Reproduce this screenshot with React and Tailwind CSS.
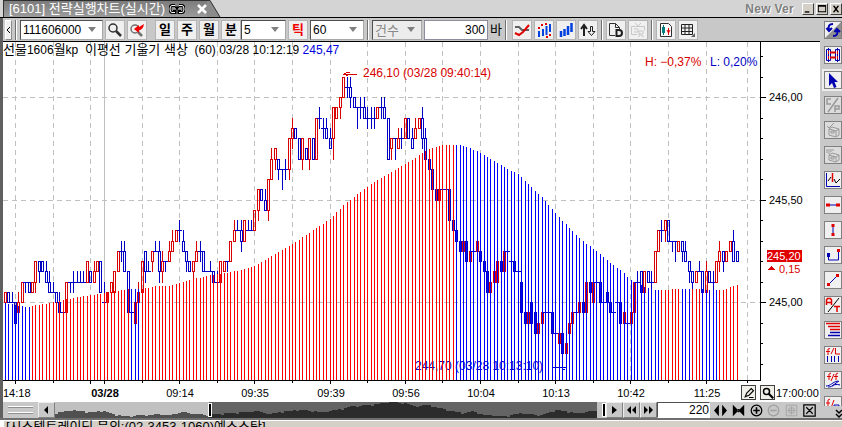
import { useState } from 'react'
import clsx from 'clsx'

// [open, close, high, low] in 0.05 ticks from 245.00
const CANDLES = [
  [0, 1], [1, 0], [0, 0, 1], [0, -2], [-1, 0, 1], [0, 2], [2, 2, 2, 1], [2, 1], [1, 2], [2, 4, 4, 1],
  [4, 3, 4, 2], [4, 3], [3, 2, 4], [2, 1, 3], [1, 1, 2], [1, 0], [0, -1, 1], [-1, -1], [-1, 2], [2, 2, 2, 1],
  [2, 2, 3, 1], [2, 2, 3], [2, 2, 3], [2, 2, 3], [2, 4], [3, 2], [2, 3, 4], [3, 4], [4, 1], [0, 0, 2],
  [0, 1], [1, 2], [1, 3], [3, 5], [5, 5, 6, 4], [5, 3, 6], [3, -1], [-1, -1], [-2, 0], [0, 1, 2],
  [1, 4], [5, 3, 5, 2], [3, 3, 4], [4, 5, 5, 3], [5, 5, 6], [5, 3, 6, 2], [3, 4, 5, 2], [4, 4, 4, 3], [4, 5, 6], [5, 6, 7],
  [6, 7], [7, 7, 8, 6], [6, 5, 7], [5, 4, 5, 3], [4, 3], [3, 4, 4, 2], [4, 5, 6], [5, 5, 6, 4], [5, 3], [3, 3],
  [3, 3, 4], [3, 2], [2, 2, 3], [2, 4], [3, 4], [4, 4, 4, 3], [4, 6], [6, 7, 8], [7, 7, 8], [7, 6, 8, 5],
  [6, 8], [7, 7, 8], [7, 7, 8], [7, 9], [9, 11, 11, 8], [11, 10], [10, 9, 11], [9, 12, 12, 8], [12, 14, 15], [14, 15, 15, 13],
  [14, 13, 14, 12], [13, 13, 13, 11], [13, 13, 14, 12], [13, 16, 16, 12], [16, 17, 18, 15], [17, 16], [16, 14], [14, 16, 16, 13], [15, 14], [14, 16, 16, 13],
  [16, 14], [14, 18], [18, 18, 19, 17], [17, 17, 18, 16], [17, 16, 18], [16, 15, 17], [16, 19, 19, 14], [18, 19], [19, 20, 20, 18], [20, 22],
  [21, 21, 22, 20], [21, 20, 22, 19], [20, 19], [19, 19, 19, 17], [19, 19, 20, 18], [19, 18, 20], [18, 18, 19, 17], [18, 18, 19, 17], [18, 18, 19, 17], [18, 19],
  [19, 19, 20, 18], [19, 18, 20], [18, 14], [15, 16, 16, 14], [16, 16, 16, 14], [15, 16, 17], [16, 16, 17, 15], [16, 18], [18, 16], [16, 15, 17],
  [16, 17, 18], [17, 18], [18, 16, 19, 15], [16, 14, 17], [14, 13], [13, 11], [11, 10], [10, 11], [11, 11], [11, 11],
  [11, 8], [8, 7], [7, 6], [6, 5], [5, 6], [6, 4], [4, 5], [5, 5], [5, 6], [5, 4],
  [4, 3], [3, 1], [1, 2], [2, 3], [2, 4], [4, 3], [3, 5], [5, 5], [4, 4], [4, 3],
  [3, 3], [2, -1], [-1, -2], [-2, -1], [0, -2], [-1, -3], [-3, -2], [-2, -1], [-1, -1], [-1, -1],
  [-1, -3], [-3, -3], [-4, -3], [-3, -5], [-5, -4], [-3, -2], [-2, -1], [-1, -1], [-1, 0], [0, -1],
  [-1, 2], [2, 1], [0, 2], [2, 2], [2, 0], [0, 0], [1, 0], [0, -1], [-1, -1], [0, 0],
  [0, -2], [-2, -1], [-2, -2], [-2, -1], [-1, 2], [2, 2, 3], [3, 1], [1, 3], [3, 2], [2, 2, 3, 1],
  [2, 5], [5, 7], [7, 7, 8, 6], [7, 8, 8, 6], [8, 6], [6, 6, 6, 5], [6, 6, 6, 4], [5, 6], [6, 5, 6, 4], [5, 4, 6],
  [4, 3, 4, 2], [3, 2, 3, 1], [2, 3], [3, 3, 4], [3, 1], [1, 3, 4], [3, 2], [2, 2, 3, 1], [2, 4], [4, 5, 6, 3],
  [5, 4, 5, 3], [4, 5], [5, 6], [6, 4, 7], [5, 4],
]

// moving average curve: [bar index, y]
const AVERAGE = [
  [0, 303], [3, 305], [6, 307], [8, 306], [13, 303], [17, 300], [20, 298], [25, 295], [29, 293], [31, 292],
  [36, 289], [40, 289], [44, 286], [48, 286], [52, 282], [55, 279], [59, 276], [62, 274], [66, 272], [70, 269],
  [73, 266], [77, 258], [80, 252], [84, 244], [88, 235], [91, 228], [95, 219], [99, 205], [103, 194], [107, 184],
  [111, 176], [115, 168], [119, 160], [121, 155], [124, 149], [126, 147], [128, 145], [133, 145], [136, 148],
  [139, 153], [142, 159], [146, 167], [150, 174], [153, 184], [157, 197], [161, 213], [165, 228], [169, 241],
  [173, 251], [177, 263], [180, 270], [183, 280], [186, 285], [188, 288], [190, 290], [193, 290], [196, 289],
  [203, 289], [207, 290], [210, 290], [212, 287], [214, 285],
]

const FALLING = [[0, 7], [37, 39], [132, 191], [198, 200], [204, 208]]

const GRID_X = [15, 53, 90, 142, 179, 217, 254, 292, 330, 367, 405, 442, 480, 518, 555, 593, 630, 668, 706, 747]

const TIMES = [
  [179, '09:14'], [254, '09:35'], [330, '09:39'], [405, '09:56'],
  [480, '10:04'], [555, '10:13'], [630, '10:42'], [706, '11:25'],
]

const OVERVIEW = [
  [0, 11], [15, 8], [27, 9], [32, 10], [48, 9], [60, 13], [68, 14], [88, 13], [104, 12], [112, 13], [127, 10], [138, 12],
  [151, 13], [160, 12], [172, 11], [188, 10], [198, 9], [205, 10], [212, 12], [228, 9], [245, 8], [265, 10], [285, 7],
  [295, 4], [315, 3], [332, 0], [348, 1], [357, 4], [372, 3], [382, 6], [395, 9], [407, 11], [415, 9], [425, 13],
  [448, 14], [462, 11], [482, 13], [498, 8], [518, 11], [535, 9], [540, 9],
]

const barX = (i) => Math.floor(5.2 + i * 3.42)
const tickY = (n) => Math.round(302 - n * 10.25)

function interpolate(points, i) {
  const k = points.findIndex(p => p[0] >= i)
  if (k <= 0) return points[0][1]
  const [x0, y0] = points[k - 1]
  const [x1, y1] = points[k]
  return Math.round(y0 + ((y1 - y0) * (i - x0)) / (x1 - x0))
}

function Candle({ i, data }) {
  const [open, close, high = Math.max(open, close), low = Math.min(open, close)] = data
  const x = barX(i)
  const color = close > open ? '#d80000' : '#0000c4'
  const top = tickY(Math.max(open, close))
  const bottom = tickY(Math.min(open, close))
  return (
    <g fill={color}>
      {top === bottom
        ? <rect x={x - 2} y={top} width="5" height="1" />
        : <path fillRule="evenodd" d={`M${x - 1} ${top}h3V${bottom + 1}h-3zM${x} ${top + 1}V${bottom}h1V${top + 1}z`} />}
      <rect x={x} y={tickY(high)} width="1" height={top - tickY(high)} />
      <rect x={x} y={bottom} width="1" height={tickY(low) - bottom + 1} />
    </g>
  )
}

function Chart() {
  return (
    <svg viewBox="3 42 817 360" className="block w-full bg-white font-['Liberation_Sans','Noto_Sans_CJK_KR',sans-serif] text-[12px]" shapeRendering="crispEdges">
      {/* grid */}
      <g stroke="#c0c0c0" strokeDasharray="5 4">
        {GRID_X.map(x => <path key={x} d={`M${x + 0.5} 42V380`} />)}
        {[97, 200, 302].map(y => <path key={y} d={`M3 ${y + 0.5}H760`} />)}
      </g>
      <rect x="104" y="42" width="1" height="338" fill="#c0c0c0" />

      {CANDLES.map((c, i) => <Candle key={i} i={i} data={c} />)}

      <text x="415" y="370" fill="#0000c4">244,70 (03/28 10:13:10)</text>
      <path d="M553 367.5h13M562 369.5h3" stroke="#0000c4" />

      {/* average histogram */}
      {CANDLES.map((_, i) => {
        const y = interpolate(AVERAGE, i)
        const down = FALLING.some(([a, b]) => i >= a && i <= b)
        return <rect key={i} x={barX(i)} y={y} width="1" height={380 - y} fill={down ? '#0000ff' : '#ff0000'} />
      })}

      <path d="M357 74.5H343M344 73.5h2M346 72.5h4M346 75.5h2" stroke="#d80000" fill="none" />
      <text x="363" y="77" fill="#d80000">246,10 (03/28 09:40:14)</text>
      <text x="645" y="66" fill="#d80000">H: −0,37%</text>
      <text x="710" y="66" fill="#0000c4">L: 0,20%</text>

      {/* axes */}
      <path d="M3 380.5H761M760.5 42V380" stroke="#000" />
      {GRID_X.map((x, i) => <rect key={x} x={x} y="381" width="1" height={i % 2 ? 2 : 3} />)}
      <rect x="104" y="381" width="1" height="3" />
      {[-6, -4, -2, 0, 2, 4, 6, 8, 10, 12, 14, 16, 18, 20, 22, 24].map(n => (
        <rect key={n} x="761" y={tickY(n)} width={n % 10 ? 2 : 5} height="1" />
      ))}
      <g className="text-[11px]">
        <text x="769" y="101">246,00</text>
        <text x="769" y="204">245,50</text>
        <text x="769" y="306">245,00</text>
        <rect x="767" y="250" width="35" height="12" fill="#e00000" />
        <text x="767" y="260" fill="#fff">245,20</text>
        <path d="M768 270l3.500-4 3.500 4z" fill="#d80000" />
        <text x="779" y="273" fill="#d80000">0,15</text>

        <text x="3" y="397">14:18</text>
        <text x="105" y="397" textAnchor="middle" fontWeight="bold">03/28</text>
        {TIMES.map(([x, label]) => <text key={x} x={x + 1} y="397" textAnchor="middle">{label}</text>)}
        <text x="776" y="397">17:00:00</text>
      </g>
    </svg>
  )
}

function ToolButton({ label, className, children }) {
  return (
    <button
      aria-label={label}
      className={clsx('flex h-5 w-5 shrink-0 items-center justify-center border border-r-[#8c8c8c] border-b-[#8c8c8c] border-t-white border-l-white bg-[#f0f0f0] outline outline-1 outline-[#b4b4b4] -outline-offset-1', className)}
    >
      {children}
    </button>
  )
}

function Separator() {
  return <div className="mx-[3px] h-5 w-0.5 shrink-0 border-l border-[#707070] bg-white" />
}

function Combo({ label, value, className, disabled }) {
  return (
    <div className={clsx('relative h-5 shrink-0 border border-t-[#505050] border-l-[#505050] border-r-[#a8a8a8] border-b-[#a8a8a8]', disabled ? 'bg-[#ececec] text-[#888]' : 'bg-white', className)}>
      <select aria-label={label} disabled={disabled} defaultValue={value} className="block h-full w-full appearance-none bg-transparent px-0.5 opacity-100 outline-none">
        <option>{value}</option>
      </select>
      <svg className="pointer-events-none absolute top-1.5 right-1.5" width="8" height="5" viewBox="0 0 8 5"><path d="M0 0h8L4 5z" fill="#808080" /></svg>
    </div>
  )
}

const Svg = ({ size = 16, children, ...props }) => (
  <svg width={size} height={size} viewBox="0 0 16 16" fill="none" className="shrink-0" {...props}>{children}</svg>
)

const RED = '#e00000'
const BLUE = '#0000b0'

const SIDE_TOOLS = [
  ['새로고침', <><path d="M16 0v16H0z" fill="#909090" /><path d="M8 2C4 2 3 4 4 8M1.500 6L4 9l3-3M8 14c4 0 5-2 4-6M9.500 10L12 7l3 3" stroke={BLUE} strokeWidth="2" /></>],
  ['동기화', <><path d="M1.500 2.500h4v11h-4zM10.500 2.500h4v11h-4zM3.500 1v14M12.500 1v14" stroke={BLUE} /><path d="M5 5.500h6M5 10.500h6" stroke={RED} strokeWidth="2" /><path d="M3.500 4v3M3.500 9v3M12.500 4v3M12.500 9v3" stroke={RED} /></>],
  ['선택', <path d="M4 1v13l3-3 2 5 2.500-1-2-5H13z" fill={BLUE} />],
  ['C/P', <path d="M6 2H2v5h4M3 15L13 1M10 15V9h4v3h-4" stroke="#999" strokeWidth="1.500" />],
  ['삭제', <path d="M2 4l2 2 5-5M4 7l3-2 7 2v6l-3 2-7-2zM4 7l7 2v5M11 9l3-2M6 9h3v2H6z" stroke="#999" />],
  ['모두 삭제', <path d="M2 2v4M4 2v5M6 2v3M8 2v2M4 8l3-2 7 2v5l-3 2-7-2zM4 8l7 2v5M11 10l3-2M6 10h3v2H6z" stroke="#999" />],
  ['지표', <><path d="M1.500 1v13.500H15" stroke={BLUE} /><path d="M3 9l3-4M9 7l2 4 4-4" stroke="#000" /><path d="M7.500 1v9" stroke={RED} strokeWidth="1.500" /></>],
  ['수평선', <><path d="M3 8h10" stroke={BLUE} /><path d="M1 6.500h4v3H1zM11 6.500h4v3h-4z" fill={RED} /></>],
  ['수직선', <><path d="M8 3v10" stroke={BLUE} /><path d="M6.500 2h3v3h-3zM6.500 11h3v3h-3z" fill={RED} /></>],
  ['가격선', <><path d="M3.500 8v5h10V5" stroke={BLUE} /><path d="M2 6h3v4H2z" fill={BLUE} /><path d="M12 2h3v3h-3z" fill={RED} /></>],
  ['추세선', <><path d="M3 13L13 3" stroke={BLUE} /><path d="M2 11h3v3H2zM11 2h3v3h-3z" fill={RED} /></>],
  ['문자', <><path d="M1.500 8V3l1-1.500h3L6.500 3v5M2 5.500h4M9 9.500h6M12 9v6" stroke={RED} strokeWidth="1.500" /><path d="M3 15L14 1" stroke="#000" /></>],
  ['되돌림', <><path d="M1 1.500h14M3 4.500h12M5 7.500h10" stroke={RED} strokeWidth="1.500" /><path d="M5 10.500h10M3 13.500h12" stroke={BLUE} strokeWidth="1.500" /></>],
  ['시간대', <><path d="M5 1.500L3 2v6M1 4.500h4M10.500 1v6H15M6 7l3-6" stroke={RED} /><path d="M2.500 9v6M6.500 9v6M9.500 9v6M13.500 9v6" stroke={BLUE} /></>],
  ['팬', <><path d="M6 1L4 2v6M2 4.500h4M13 1l-2 1v6M9 4.500h4M6 9l3-7" stroke={RED} /><path d="M1 14c5 0 6-4 12-5M3 15c6 0 5-4 12-2M7 14l7-5" stroke={BLUE} /></>],
  ['호', <><path d="M5 2L3 3v8M1 6h4M6 11L9 3" stroke={RED} /><path d="M9 8h5v5H9zM2 13h5" stroke={BLUE} /></>],
]

const NAV_ICONS = [
  ['확대', <path d="M6 1v14L0 8zM10 1v14l6-7z" fill="#000" />],
  ['축소', <path d="M1 1v14l7-7zM15 1v14L8 8zM7 6h2v4H7z" fill="#000" />],
  ['더하기', <><circle cx="8" cy="8" r="6.500" stroke="#000" strokeWidth="1.500" /><path d="M8 4v8M4 8h8" stroke="#000" strokeWidth="2" /></>],
  ['빼기', <><circle cx="8" cy="8" r="6.500" stroke="#a0a0a0" strokeWidth="1.500" /><path d="M4 8h8" stroke="#a0a0a0" strokeWidth="2" /></>],
  ['격자', <path d="M1.500 1.500h13v13h-13zM8 3v10M3 8h10M5 5h6v6H5z" stroke="#a0a0a0" />],
  ['닫기', <path d="M1 1h14v14H1zM4 4l8 8M12 4l-8 8" stroke="#000" strokeWidth="1.500" />],
]

function TitleBar() {
  return (
    <header className="flex h-[18px] items-stretch border-b border-black bg-[#d4d4d4] pl-[3px]">
      <div className="flex items-center border-t border-l border-[#303030] bg-gradient-to-b from-[#7c7c7c] to-[#9c9c9c] pl-[5px]">
        <span className="text-[13px] leading-4 whitespace-pre text-white">[6101] 전략실행차트(실시간)</span>
        <svg className="ml-1" width="16" height="10" viewBox="0 0 16 10" fill="none">
          <path d="M6 1.500H3Q1 1.500 1 5t2 3.500h3V6H4M10 1.500h3q2 0 2 3.500t-2 3.500h-3V6h2M6 4h4" stroke="#000" strokeWidth="3" />
          <path d="M6 1.500H3Q1 1.500 1 5t2 3.500h3M10 1.500h3q2 0 2 3.500t-2 3.500h-3M4 5h3M9 5h3" stroke="#fff" />
        </svg>
        <button aria-label="탭 닫기" className="ml-3">
          <svg width="10" height="10" viewBox="0 0 10 10"><path d="M1 1l8 8M9 1L1 9" stroke="#fff" strokeWidth="2.500" /></svg>
        </button>
      </div>
      <svg width="14" height="17" viewBox="0 0 14 17" className="shrink-0">
        <path d="M0 0h3l10 17H0z" fill="#8c8c8c" />
        <path d="M0 .5h3L13 17" fill="none" stroke="#303030" />
      </svg>
      <span className="ml-auto self-center font-['Liberation_Sans'] text-[12px] leading-4 font-bold tracking-wide text-[#808080] [text-shadow:1px_1px_0_white]">New Ver</span>
      <div className="ml-2 flex items-center gap-0.5">
        {[['최소화', 'M2 8h5v1.500H2z'], ['최대화', 'M1 1h9v8H1zM2 3v5h7V3z'], ['닫기', 'M2 2h2l1.500 2L7 2h2L6.500 5.500 9 9H7L5.500 7 4 9H2l2.500-3.500z']].map(([label, d]) => (
          <button key={label} aria-label={label} className="flex h-3 w-3 items-center justify-center border border-t-white border-l-white border-r-[#404040] border-b-[#404040] bg-[#d4d0c8]">
            <svg width="10" height="10" viewBox="0 0 11 11"><path d={d} fillRule="evenodd" /></svg>
          </button>
        ))}
      </div>
    </header>
  )
}

function Toolbar() {
  const [bars, setBars] = useState('300')
  return (
    <div className="flex h-6 items-center border-b border-black bg-[#c8c8c8] pl-0.5 text-[12px]">
      <button aria-label="이전" className="flex h-5 w-[7px] items-center justify-center border border-r-[#8c8c8c] border-b-[#8c8c8c] border-t-white border-l-white bg-[#f0f0f0]">
        <svg width="5" height="6" viewBox="0 0 5 6"><path d="M4 0L1 3l3 3" fill="none" stroke="#000" /></svg>
      </button>
      <Separator />
      <Combo label="종목" value="111606000" className="w-[83px]" />
      <div className="ml-0.5 flex gap-0.5">
        <ToolButton label="종목 검색">
          <Svg><circle cx="6" cy="6" r="4" stroke="#303030" strokeWidth="1.500" /><path d="M9 9l5 5" stroke="#303030" strokeWidth="2.500" /></Svg>
        </ToolButton>
        <ToolButton label="전략 검색">
          <Svg><circle cx="6" cy="7" r="4" stroke="#707070" strokeWidth="1.500" /><path d="M9 10l4 4" stroke="#707070" strokeWidth="2.500" /><path d="M15 2l-5 3V3L5 7l5 4V8q4 0 5-6z" fill="#f00000" /></Svg>
        </ToolButton>
      </div>
      <div className="ml-2 flex gap-0.5 text-[13px] leading-4 font-bold">
        {['일', '주', '월', '분'].map(t => <ToolButton key={t}>{t}</ToolButton>)}
      </div>
      <Combo label="분 주기" value="5" className="w-[45px]" />
      <ToolButton className="ml-0.5 text-[13px] leading-4 font-bold text-[#f00000]">틱</ToolButton>
      <Combo label="틱 주기" value="60" className="ml-0.5 w-[54px]" />
      <Separator />
      <Combo label="조회 기준" value="건수" disabled className="w-[50px] text-[13px]" />
      <input
        id="bars"
        value={bars}
        onChange={(e) => setBars(e.target.value)}
        className="ml-0.5 h-5 w-16 border border-[#8c8c9c] bg-white pr-0.5 text-right outline-none"
      />
      <label htmlFor="bars" className="ml-0.5 text-[13px]">바</label>
      <Separator />
      <div className="ml-0.5 flex gap-0.5">
        <ToolButton label="이평선">
          <Svg><path d="M1 5h4l3 3h7" stroke="#606060" strokeWidth="2" /><path d="M1 11l4 2 4-3 6-7" stroke={RED} strokeWidth="2" /></Svg>
        </ToolButton>
        <ToolButton label="신호 표시">
          <Svg><path d="M3 9v6M7 7v7M10.500 4v9M14 2v8" stroke="#0040e0" strokeWidth="2" /><path d="M2 5h2v2H2zM5 2h2v2H5zM10 14h2v2h-2zM13 12h2v2h-2zM9 1h2v2H9z" fill={RED} /></Svg>
        </ToolButton>
        <ToolButton label="봉 차트">
          <Svg><path d="M3 9v6M6.500 7v7M10 4v9M13.500 1v9" stroke="#0040e0" strokeWidth="2.500" /></Svg>
        </ToolButton>
        <ToolButton label="정렬">
          <Svg><path d="M4 14V4M1 7l3-4 3 4" stroke="#202020" strokeWidth="2" /><path d="M10.500 4.500h2v5h2.500l-3.500 4-3.500-4h2.500z" stroke="#202020" /></Svg>
        </ToolButton>
      </div>
      <Separator />
      <div className="flex gap-0.5">
        <ToolButton label="문서">
          <Svg><path d="M7 13.500H1.500v-12h6l4 4V7M7.500 1.500v4h4" stroke="#303030" /><path d="M8.500 8v6h2.500q3 0 3-3t-3-3z" stroke="#202020" strokeWidth="2" /></Svg>
        </ToolButton>
        <ToolButton label="연결">
          <Svg><path d="M5 1l3 3 3-3M1.500 4.500h13v4M1.500 4.500v8H7M9 15V9h4v3H9l5 3M4 7h4v3H4" stroke="#c8c8c8" /></Svg>
        </ToolButton>
      </div>
      <Separator />
      <div className="flex gap-0.5">
        <ToolButton label="종목 정보">
          <Svg><path d="M2.500 1.500h8l3 3v10h-11z" stroke="#303030" fill="#fff" /><path d="M5.500 3v10" stroke="#007070" /><path d="M4 5h3v6H4z" fill="#008080" /><path d="M10.500 6v7M9 8l1.500 3L12 8" stroke={RED} /></Svg>
        </ToolButton>
        <ToolButton label="표">
          <Svg><path d="M1.500 2.500h11v10h-11zM5 2v11M9 2v11M1 6h12M1 9.500h12" stroke="#202020" /><path d="M15 11v4h-4z" fill="#606060" /></Svg>
        </ToolButton>
      </div>
    </div>
  )
}

function NavButton({ label, d }) {
  return (
    <button aria-label={label} className="flex h-4 w-[17px] shrink-0 items-center justify-center border border-t-[#ececec] border-l-[#ececec] border-r-[#808080] border-b-[#808080] bg-[#c8c8c8]">
      <svg width="9" height="8" viewBox="0 0 9 8"><path d={d} /></svg>
    </button>
  )
}

function NavBar() {
  const [count, setCount] = useState('220')
  // stepped outline of the whole session
  let outline = 'M0 16'
  for (let x = 0; x < 540; x += 3) {
    outline += `V${interpolate(OVERVIEW, x) + ((x * 7) % 5 === 0 ? 1 : 0)}H${x + 3}`
  }
  outline += 'V16z'
  return (
    <div className="flex h-4 items-center bg-[#c8c8c8]">
      <div className="flex w-[35px] shrink-0 flex-col gap-1 px-[5px]">
        <div className="h-0.5 border-t border-white bg-[#909090]" />
        <div className="h-0.5 border-t border-white bg-[#909090]" />
      </div>
      <NavButton label="왼쪽" d="M6 0v8L2 4z" />
      <svg className="h-4 min-w-0 flex-1" viewBox="0 0 549 16" preserveAspectRatio="none" shapeRendering="crispEdges">
        <rect width="549" height="16" fill="#c0c0c0" />
        <rect x="153" width="387" height="16" fill="#646464" />
        <path d={outline} fill="#505050" />
        <clipPath id="range"><rect x="153" width="387" height="16" /></clipPath>
        <path d={outline} fill="#2c2c2c" clipPath="url(#range)" />
        <path d="M152 1h4v14h-4zM545 1h4v14h-4z" fill="#fff" />
        <path d="M153 2h2v12h-2zM546 2h2v12h-2z" fill="#000" />
      </svg>
      <NavButton label="오른쪽" d="M2 0v8l5-4z" />
      <NavButton label="뒤로" d="M4 0v8L0 4zM9 0v8L5 4z" />
      <NavButton label="앞으로" d="M0 0v8l4-4zM5 0v8l4-4z" />
      <input
        aria-label="봉 개수"
        value={count}
        onChange={(e) => setCount(e.target.value)}
        className="h-4 w-[53px] shrink-0 border border-t-[#505050] border-l-[#505050] border-r-white border-b-white bg-white text-right text-[12px] leading-none outline-none"
      />
      <div className="flex w-[110px] shrink-0 items-center justify-between px-1">
        {NAV_ICONS.map(([label, icon]) => (
          <button key={label} aria-label={label}><Svg size={13}>{icon}</Svg></button>
        ))}
      </div>
    </div>
  )
}

function SideBar() {
  return (
    <aside className="relative w-[22px] shrink-0 overflow-hidden bg-[#c8c8c8]">
      <div className="absolute inset-x-0 top-0 bottom-3 flex flex-col gap-[7px] overflow-hidden pt-[3px] pl-1">
        {SIDE_TOOLS.map(([label, icon], i) => (
          <button
            key={label}
            aria-label={label}
            className={clsx(
              'flex h-[18px] w-[18px] shrink-0 items-center justify-center border border-[#808080]',
              i === 2 && 'outline outline-2 outline-[#ececec]',
              i > 2 && i < 6 ? 'bg-[#dcdcdc]' : 'bg-[#f0f0f0]'
            )}
          >
            <Svg>{icon}</Svg>
          </button>
        ))}
      </div>
      <button aria-label="더보기" className="absolute right-0 bottom-0">
        <svg width="7" height="9" viewBox="0 0 7 9"><path d="M1 1l3 3 3-3M1 5l3 3 3-3" fill="none" stroke="#000" strokeWidth="1.500" /></svg>
      </button>
    </aside>
  )
}

export default function App() {
  return (
    <div className="h-screen overflow-hidden bg-[#d4d0c8] font-['Liberation_Sans','Noto_Sans_CJK_KR',sans-serif] text-black">
      <TitleBar />
      <div className="flex border-l-[3px] border-[#606060]">
        <main className="min-w-0 flex-1">
          <Toolbar />
          <div className="relative">
            <Chart />
            <h1 className="absolute top-0 left-0 text-[12px] leading-4 whitespace-pre">
              <span className="text-[13px]">선물</span>1606<span className="text-[13px]">월</span>kp  <span className="text-[13px]">이평선 기울기 색상</span>  (60) 03/28 10:12:19 <span className="text-[#0000e0]">245,47</span>
            </h1>
            <div className="absolute right-[45px] bottom-0.5 flex gap-1">
              <button aria-label="그리기" className="flex h-[15px] w-[15px] items-center justify-center border border-[#404040] bg-[#f0f0e8]">
                <Svg size={12}><path d="M3 13l2-5 6-6 3 3-6 6zM8 14h6" stroke="#000" strokeWidth="1.500" /></Svg>
              </button>
              <button aria-label="돋보기" className="flex h-[15px] w-[15px] items-center justify-center border border-[#404040] bg-[#f0f0e8]">
                <Svg size={12}><circle cx="6" cy="6" r="4" stroke="#000" strokeWidth="2" /><path d="M9 9l6 6" stroke="#000" strokeWidth="3" /></Svg>
              </button>
            </div>
          </div>
          <NavBar />
        </main>
        <SideBar />
      </div>
      <div className="border-t-2 border-[#707070]">
        <footer className="border-t border-l-4 border-white pl-0.5 text-[13px] leading-3">[시스템트레이딩 문의:(02-3453-1060)예스스탁]</footer>
      </div>
    </div>
  )
}
